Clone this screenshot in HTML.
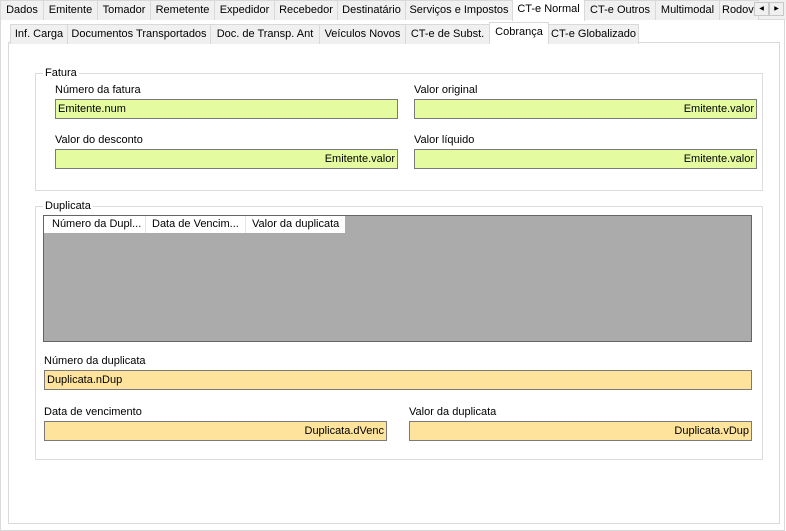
<!DOCTYPE html>
<html><head><meta charset="utf-8"><style>
*{box-sizing:border-box;margin:0;padding:0}
body{width:786px;height:531px;background:#fff;position:relative;overflow:hidden;font-family:"Liberation Sans",sans-serif;font-size:11px;color:#000}
.a{position:absolute}
.tab{position:absolute;height:20px;background:#f0f0f0;border:1px solid #d9d9d9;border-bottom:none;text-align:center;line-height:18px;white-space:nowrap;overflow:hidden}
.sel{background:#fff;height:22px;z-index:3;border-color:#d9d9d9}
.grp{position:absolute;border:1px solid #dcdcdc}
.gl{position:absolute;top:-8px;left:7px;background:#fff;padding:0 2px;line-height:14px}
.lbl{position:absolute;line-height:14px}
.in{position:absolute;height:20px;border:1px solid #7a7a7a;line-height:18px;padding:0 2px;white-space:nowrap}
.g{background:#e4fc9f}.o{background:#fde39b}
.r{text-align:right}
.hd span{white-space:nowrap;overflow:hidden}
</style></head><body>
<div class="a" style="left:0;top:0;width:786px;height:20px;background:#f0f0f0"></div>
<div class="a" style="left:0;top:19px;width:785px;height:512px;border:1px solid #d9d9d9;background:#fff"></div>
<div class="tab" style="left:0;top:0;width:44px">Dados</div>
<div class="tab" style="left:43px;top:0;width:55px">Emitente</div>
<div class="tab" style="left:97px;top:0;width:54px">Tomador</div>
<div class="tab" style="left:150px;top:0;width:65px">Remetente</div>
<div class="tab" style="left:214px;top:0;width:61px">Expedidor</div>
<div class="tab" style="left:274px;top:0;width:64px">Recebedor</div>
<div class="tab" style="left:337px;top:0;width:69px">Destinatário</div>
<div class="tab" style="left:405px;top:0;width:108px">Serviços e Impostos</div>
<div class="tab sel" style="left:512px;top:-1px;width:73px">CT-e Normal</div>
<div class="tab" style="left:584px;top:0;width:72px">CT-e Outros</div>
<div class="tab" style="left:655px;top:0;width:65px">Multimodal</div>
<div class="tab" style="left:719px;top:0;width:40px;text-align:left;padding-left:2px">Rodov</div>
<div class="a" style="left:754px;top:2px;width:15px;height:14px;background:#f0f0f0;border:1px solid #c8c8c8;font-size:6px;line-height:12px;text-align:center">◀</div>
<div class="a" style="left:769px;top:2px;width:15px;height:14px;background:#f0f0f0;border:1px solid #c8c8c8;font-size:6px;line-height:12px;text-align:center">▶</div>

<div class="a" style="left:8px;top:42px;width:772px;height:482px;border:1px solid #d9d9d9;background:#fff"></div>
<div class="tab" style="left:10px;top:24px;width:58px">Inf. Carga</div>
<div class="tab" style="left:67px;top:24px;width:144px">Documentos Transportados</div>
<div class="tab" style="left:210px;top:24px;width:110px">Doc. de Transp. Ant</div>
<div class="tab" style="left:319px;top:24px;width:87px">Veículos Novos</div>
<div class="tab" style="left:405px;top:24px;width:85px">CT-e de Subst.</div>
<div class="tab sel" style="left:489px;top:22px;width:60px">Cobrança</div>
<div class="tab" style="left:548px;top:24px;width:91px">CT-e Globalizado</div>

<div class="grp" style="left:35px;top:73px;width:728px;height:118px"><div class="gl">Fatura</div></div>
<div class="lbl" style="left:55px;top:83px">Número da fatura</div>
<div class="in g" style="left:55px;top:99px;width:343px">Emitente.num</div>
<div class="lbl" style="left:414px;top:83px">Valor original</div>
<div class="in g r" style="left:414px;top:99px;width:343px">Emitente.valor</div>
<div class="lbl" style="left:55px;top:133px">Valor do desconto</div>
<div class="in g r" style="left:55px;top:149px;width:343px">Emitente.valor</div>
<div class="lbl" style="left:414px;top:133px">Valor líquido</div>
<div class="in g r" style="left:414px;top:149px;width:343px">Emitente.valor</div>

<div class="grp" style="left:35px;top:206px;width:728px;height:254px"><div class="gl">Duplicata</div></div>
<div class="a" style="left:43px;top:215px;width:709px;height:127px;background:#ababab;border:1px solid #646464"></div>
<div class="a hd" style="left:44px;top:216px;width:301px;height:17px;background:#fff;line-height:17px">
<span class="a" style="left:0;width:102px;padding-left:8px;border-right:1px solid #e5e5e5;height:17px">Número da Dupl...</span>
<span class="a" style="left:102px;width:100px;padding-left:6px;border-right:1px solid #e5e5e5;height:17px">Data de Vencim...</span>
<span class="a" style="left:202px;width:99px;padding-left:6px;height:17px">Valor da duplicata</span></div>
<div class="lbl" style="left:44px;top:354px">Número da duplicata</div>
<div class="in o" style="left:44px;top:370px;width:708px">Duplicata.nDup</div>
<div class="lbl" style="left:44px;top:405px">Data de vencimento</div>
<div class="in o r" style="left:44px;top:421px;width:343px">Duplicata.dVenc</div>
<div class="lbl" style="left:409px;top:405px">Valor da duplicata</div>
<div class="in o r" style="left:409px;top:421px;width:343px">Duplicata.vDup</div>
</body></html>
